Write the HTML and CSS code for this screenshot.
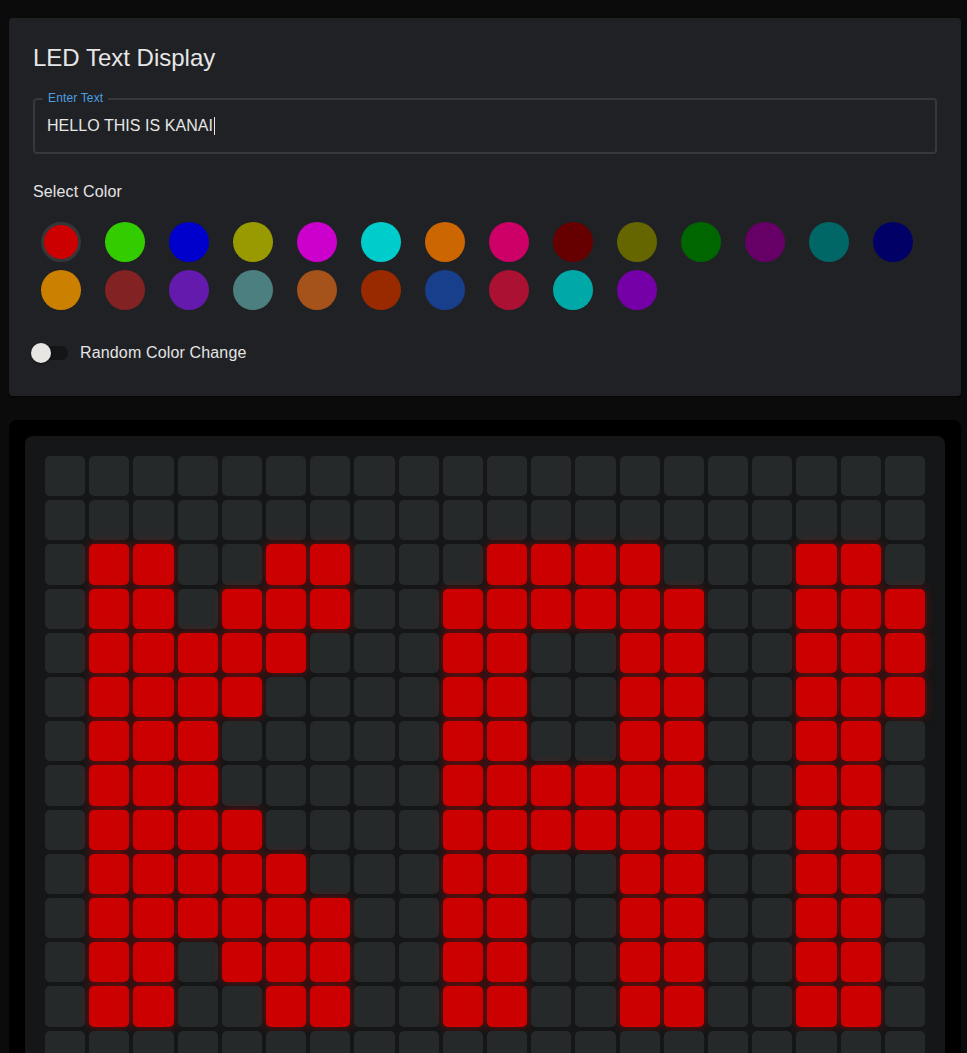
FILE: index.html
```html
<!DOCTYPE html>
<html lang="en">
<head>
<meta charset="utf-8">
<title>LED Text Display</title>
<link rel="stylesheet" href="styles.css">
</head>
<body>
<div class="app">
  <section class="card">
    <h1 class="title">LED Text Display</h1>
    <div class="field">
      <span class="field-label">Enter Text</span>
      <div class="field-input">HELLO THIS IS KANAI<span class="caret"></span></div>
    </div>
    <div class="section-label">Select Color</div>
    <div class="swatches">
      <span class="swatch selected" style="background:#cc0000"></span>
      <span class="swatch" style="background:#33cc00"></span>
      <span class="swatch" style="background:#0000cc"></span>
      <span class="swatch" style="background:#999900"></span>
      <span class="swatch" style="background:#cc00cc"></span>
      <span class="swatch" style="background:#00cccc"></span>
      <span class="swatch" style="background:#cc6600"></span>
      <span class="swatch" style="background:#cc0066"></span>
      <span class="swatch" style="background:#660000"></span>
      <span class="swatch" style="background:#666600"></span>
      <span class="swatch" style="background:#006600"></span>
      <span class="swatch" style="background:#660066"></span>
      <span class="swatch" style="background:#006666"></span>
      <span class="swatch" style="background:#000066"></span>
      <span class="swatch" style="background:#cc8000"></span>
      <span class="swatch" style="background:#832222"></span>
      <span class="swatch" style="background:#641aad"></span>
      <span class="swatch" style="background:#4c7f7f"></span>
      <span class="swatch" style="background:#a5531a"></span>
      <span class="swatch" style="background:#992a00"></span>
      <span class="swatch" style="background:#173f8c"></span>
      <span class="swatch" style="background:#aa1133"></span>
      <span class="swatch" style="background:#00a8a8"></span>
      <span class="swatch" style="background:#7500a8"></span>
    </div>
    <label class="toggle-row">
      <span class="switch"><span class="track"></span><span class="thumb"></span></span>
      <span class="toggle-label">Random Color Change</span>
    </label>
  </section>

  <section class="board">
    <div class="panel">
      <div class="grid">
        <i></i><i></i><i></i><i></i><i></i><i></i><i></i><i></i><i></i><i></i><i></i><i></i><i></i><i></i><i></i><i></i><i></i><i></i><i></i><i></i>
        <i></i><i></i><i></i><i></i><i></i><i></i><i></i><i></i><i></i><i></i><i></i><i></i><i></i><i></i><i></i><i></i><i></i><i></i><i></i><i></i>
        <i></i><i class="on"></i><i class="on"></i><i></i><i></i><i class="on"></i><i class="on"></i><i></i><i></i><i></i><i class="on"></i><i class="on"></i><i class="on"></i><i class="on"></i><i></i><i></i><i></i><i class="on"></i><i class="on"></i><i></i>
        <i></i><i class="on"></i><i class="on"></i><i></i><i class="on"></i><i class="on"></i><i class="on"></i><i></i><i></i><i class="on"></i><i class="on"></i><i class="on"></i><i class="on"></i><i class="on"></i><i class="on"></i><i></i><i></i><i class="on"></i><i class="on"></i><i class="on"></i>
        <i></i><i class="on"></i><i class="on"></i><i class="on"></i><i class="on"></i><i class="on"></i><i></i><i></i><i></i><i class="on"></i><i class="on"></i><i></i><i></i><i class="on"></i><i class="on"></i><i></i><i></i><i class="on"></i><i class="on"></i><i class="on"></i>
        <i></i><i class="on"></i><i class="on"></i><i class="on"></i><i class="on"></i><i></i><i></i><i></i><i></i><i class="on"></i><i class="on"></i><i></i><i></i><i class="on"></i><i class="on"></i><i></i><i></i><i class="on"></i><i class="on"></i><i class="on"></i>
        <i></i><i class="on"></i><i class="on"></i><i class="on"></i><i></i><i></i><i></i><i></i><i></i><i class="on"></i><i class="on"></i><i></i><i></i><i class="on"></i><i class="on"></i><i></i><i></i><i class="on"></i><i class="on"></i><i></i>
        <i></i><i class="on"></i><i class="on"></i><i class="on"></i><i></i><i></i><i></i><i></i><i></i><i class="on"></i><i class="on"></i><i class="on"></i><i class="on"></i><i class="on"></i><i class="on"></i><i></i><i></i><i class="on"></i><i class="on"></i><i></i>
        <i></i><i class="on"></i><i class="on"></i><i class="on"></i><i class="on"></i><i></i><i></i><i></i><i></i><i class="on"></i><i class="on"></i><i class="on"></i><i class="on"></i><i class="on"></i><i class="on"></i><i></i><i></i><i class="on"></i><i class="on"></i><i></i>
        <i></i><i class="on"></i><i class="on"></i><i class="on"></i><i class="on"></i><i class="on"></i><i></i><i></i><i></i><i class="on"></i><i class="on"></i><i></i><i></i><i class="on"></i><i class="on"></i><i></i><i></i><i class="on"></i><i class="on"></i><i></i>
        <i></i><i class="on"></i><i class="on"></i><i class="on"></i><i class="on"></i><i class="on"></i><i class="on"></i><i></i><i></i><i class="on"></i><i class="on"></i><i></i><i></i><i class="on"></i><i class="on"></i><i></i><i></i><i class="on"></i><i class="on"></i><i></i>
        <i></i><i class="on"></i><i class="on"></i><i></i><i class="on"></i><i class="on"></i><i class="on"></i><i></i><i></i><i class="on"></i><i class="on"></i><i></i><i></i><i class="on"></i><i class="on"></i><i></i><i></i><i class="on"></i><i class="on"></i><i></i>
        <i></i><i class="on"></i><i class="on"></i><i></i><i></i><i class="on"></i><i class="on"></i><i></i><i></i><i class="on"></i><i class="on"></i><i></i><i></i><i class="on"></i><i class="on"></i><i></i><i></i><i class="on"></i><i class="on"></i><i></i>
        <i></i><i></i><i></i><i></i><i></i><i></i><i></i><i></i><i></i><i></i><i></i><i></i><i></i><i></i><i></i><i></i><i></i><i></i><i></i><i></i>
        <i></i><i></i><i></i><i></i><i></i><i></i><i></i><i></i><i></i><i></i><i></i><i></i><i></i><i></i><i></i><i></i><i></i><i></i><i></i><i></i>
        <i></i><i></i><i></i><i></i><i></i><i></i><i></i><i></i><i></i><i></i><i></i><i></i><i></i><i></i><i></i><i></i><i></i><i></i><i></i><i></i>
      </div>
    </div>
  </section>
</div>
</body>
</html>
```

FILE: styles.css
```css
html, body {
  margin: 0;
  padding: 0;
  background: #0b0b0b;
  overflow: hidden;
}

body {
  font-family: "Liberation Sans", Arial, Helvetica, sans-serif;
  color: #e4e4e4;
}

.app {
  width: 952px;
  padding: 18px 0 0 9px;
  display: flex;
  flex-direction: column;
  gap: 24px;
}

.card {
  background: #202124;
  border-radius: 4px;
  padding: 24px;
  box-shadow: 0 2px 1px -1px rgba(0,0,0,0.2), 0 1px 1px rgba(0,0,0,0.14), 0 1px 3px rgba(0,0,0,0.12);
}

.title {
  margin: 0 0 24px;
  font-size: 24px;
  font-weight: 400;
  line-height: 32px;
  color: #e6e6e6;
}

.field {
  position: relative;
  height: 56px;
  box-sizing: border-box;
  border: 2px solid #37383b;
  border-radius: 4px;
  display: flex;
  align-items: center;
  padding: 0 12px;
}

.field-label {
  position: absolute;
  top: -9px;
  left: 8px;
  padding: 0 5px;
  background: #202124;
  font-size: 12px;
  line-height: 14px;
  letter-spacing: 0.15px;
  color: #4b9fe1;
}

.field-input {
  font-size: 16px;
  line-height: 24px;
  letter-spacing: 0.05px;
  color: #e6e6e6;
  display: flex;
  align-items: center;
}

.caret {
  display: inline-block;
  width: 1px;
  height: 18px;
  background: #e6e6e6;
  margin-left: 1px;
}

.section-label {
  margin-top: 26px;
  font-size: 16px;
  line-height: 24px;
  letter-spacing: 0.15px;
  color: #e4e4e4;
}

.swatches {
  margin-top: 18px;
  padding: 0 8px;
  display: flex;
  flex-wrap: wrap;
  gap: 8px 24px;
}

.swatch {
  width: 40px;
  height: 40px;
  border-radius: 50%;
  box-sizing: border-box;
  flex: none;
}

.swatch.selected {
  border: 3px solid #34363a;
}

.toggle-row {
  margin-top: 24px;
  display: flex;
  align-items: center;
  margin-left: -11px;
}

.switch {
  position: relative;
  width: 58px;
  height: 38px;
  flex: none;
}

.track {
  position: absolute;
  left: 12px;
  top: 12px;
  width: 34px;
  height: 14px;
  border-radius: 7px;
  background: #141516;
}

.thumb {
  position: absolute;
  left: 9px;
  top: 9px;
  width: 20px;
  height: 20px;
  border-radius: 50%;
  background: #e8e6e3;
  box-shadow: 0 2px 1px -1px rgba(0,0,0,0.2), 0 1px 1px rgba(0,0,0,0.14), 0 1px 3px rgba(0,0,0,0.12);
}

.toggle-label {
  font-size: 16px;
  line-height: 24px;
  letter-spacing: 0.15px;
  color: #e4e4e4;
}

.board {
  background: #000;
  border-radius: 8px;
  padding: 16px;
}

.panel {
  background: #151617;
  border-radius: 8px;
  padding: 20px;
}

.grid {
  display: grid;
  grid-template-columns: repeat(20, 1fr);
  gap: 4px;
}

.grid i {
  display: block;
  aspect-ratio: 1;
  border-radius: 5px;
  background: #26292a;
}

.grid i.on {
  background: #cc0000;
  box-shadow: 0 0 10px rgba(204, 0, 0, 0.55);
}
```
